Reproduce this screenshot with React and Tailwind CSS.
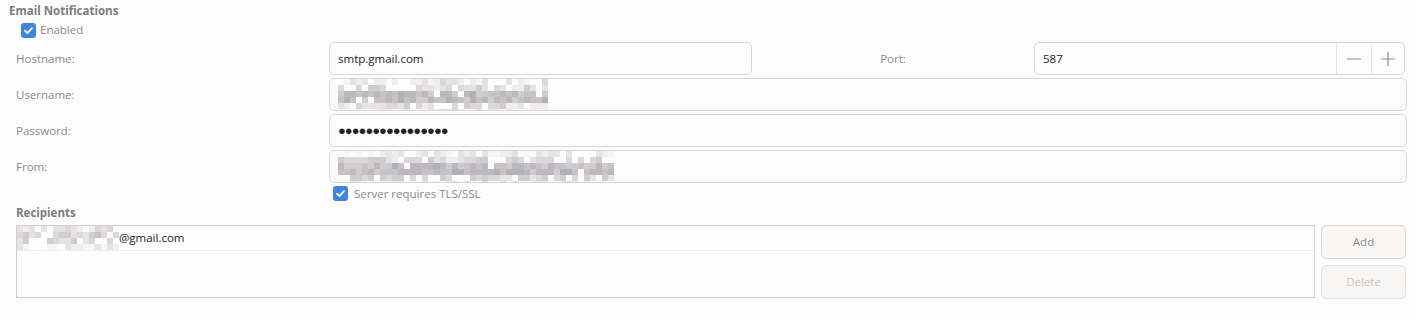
import React from "react";

const font = { fontFamily: '"Open Sans", "Noto Sans", "Liberation Sans", sans-serif' };

// pixelated (blurred-out) text, drawn as a small mosaic
const palette = ["#f7f6f6", "#efeded", "#e5e3e3", "#dbd8d9", "#d0cdce", "#c6c2c6", "#bbb8c0", "#b2b0b8"];
const rand = (seed) => {
  let s = seed;
  return () => {
    s = (s * 9301 + 49297) % 233280;
    return s / 233280;
  };
};

const Mosaic = ({ cols, profile, seed, cell = 6 }) => {
  const r = rand(seed);
  const rects = [];
  profile.forEach((p, y) => {
    for (let x = 0; x < cols; x++) {
      const v = r();
      const skip = r() > 0.6 + p * 0.4;
      if (skip) continue;
      const idx = Math.min(palette.length - 1, Math.floor(v * 3 + p * 5));
      rects.push(<rect key={`${x}-${y}`} x={x * cell} y={y * cell} width={cell} height={cell} fill={palette[idx]} />);
    }
  });
  return (
    <svg width={cols * cell} height={profile.length * cell} className="block">
      {rects}
    </svg>
  );
};

const Check = ({ className = "" }) => (
  <span className={`inline-flex items-center justify-center w-[15px] h-[15px] rounded-[3px] bg-[#3d85e0] ${className}`}>
    <svg width="11" height="11" viewBox="0 0 12 12">
      <path d="M2.2 6.3 L4.8 8.8 L9.8 3.4" fill="none" stroke="#fff" strokeWidth="2" strokeLinecap="round" strokeLinejoin="round" />
    </svg>
  </span>
);

const Label = ({ children }) => (
  <div className="w-[313px] shrink-0 text-[11.5px] text-[#8a8a8a]">{children}</div>
);

const Field = ({ children, className = "" }) => (
  <div className={`h-[33px] border border-[#d9d5d2] rounded-[5px] bg-[#fdfdfd] flex items-center px-[8px] text-[11.5px] text-[#222] overflow-hidden ${className}`}>
    {children}
  </div>
);

export default function App() {
  return (
    <div className="w-full h-[320px] bg-[#fcfcfc] overflow-hidden" style={font}>
      <div className="pl-[9px] pt-[3px]">
        <div className="text-[11.5px] font-bold text-[#7c7c7c] leading-[16px]">Email Notifications</div>
        <div className="flex items-center gap-[4px] ml-[12px] mt-[3px] h-[16px]">
          <Check />
          <span className="text-[11.5px] text-[#8a8a8a]">Enabled</span>
        </div>
      </div>

      <div className="flex flex-col gap-[3px] mt-[4px] pl-[16px] pr-[9px]">
        <div className="flex items-center">
          <Label>Hostname:</Label>
          <Field className="w-[423px]">smtp.gmail.com</Field>
          <div className="flex-1 text-center text-[11.5px] text-[#8a8a8a]">Port:</div>
          <Field className="w-[371px] mr-[2px] pr-0">
            <span className="flex-1">587</span>
            <div className="flex h-full">
              <div className="w-[35px] h-full border-l border-[#e6e3e1] flex items-center justify-center">
                <svg width="14" height="14" viewBox="0 0 14 14">
                  <path d="M0 7 H14" stroke="#8c8c8c" strokeWidth="1.2" />
                </svg>
              </div>
              <div className="w-[33px] h-full border-l border-[#e6e3e1] flex items-center justify-center">
                <svg width="14" height="14" viewBox="0 0 14 14">
                  <path d="M0 7 H14 M7 0 V14" stroke="#8c8c8c" strokeWidth="1.2" />
                </svg>
              </div>
            </div>
          </Field>
        </div>

        <div className="flex items-center">
          <Label>Username:</Label>
          <Field className="flex-1 px-[3px] items-start">
            <Mosaic cols={35} profile={[0.05, 0.3, 0.85, 0.9, 0.3, 0.05]} seed={17} />
          </Field>
        </div>

        <div className="flex items-center">
          <Label>Password:</Label>
          <Field className="flex-1 tracking-[-1px] text-[13px]">●●●●●●●●●●●●●●●●</Field>
        </div>

        <div className="flex items-center">
          <Label>From:</Label>
          <Field className="flex-1 px-[3px] items-start">
            <Mosaic cols={46} profile={[0.05, 0.35, 0.85, 0.9, 0.45, 0.1]} seed={41} />
          </Field>
        </div>
      </div>

      <div className="flex items-center gap-[6px] ml-[333px] mt-[3px] h-[15px]">
        <Check />
        <span className="text-[11.5px] text-[#8a8a8a]">Server requires TLS/SSL</span>
      </div>

      <div className="pl-[16px] mt-[4px] text-[11.5px] font-bold text-[#7c7c7c] leading-[16px]">Recipients</div>

      <div className="flex gap-[6px] pl-[16px] mt-[4px]">
        <div className="w-[1299px] h-[73px] border border-[#d2ceca] bg-[#fdfdfd]">
          <div className="h-[25px] border-b border-[#efeeec] flex items-center text-[11.5px] text-[#222]">
            <Mosaic cols={17} profile={[0.2, 0.5, 0.4, 0.05]} seed={7} />
            <span>@gmail.com</span>
          </div>
        </div>
        <div className="flex flex-col gap-[6px]">
          <button className="w-[85px] h-[34px] rounded-[5px] border border-[#dcd8d4] bg-[#f7f6f5] text-[11.5px] text-[#8a8a8a]">Add</button>
          <button className="w-[85px] h-[34px] rounded-[5px] border border-[#e6e3e0] bg-[#f7f6f5] text-[11.5px] text-[#c6c4c4]">Delete</button>
        </div>
      </div>
    </div>
  );
}
